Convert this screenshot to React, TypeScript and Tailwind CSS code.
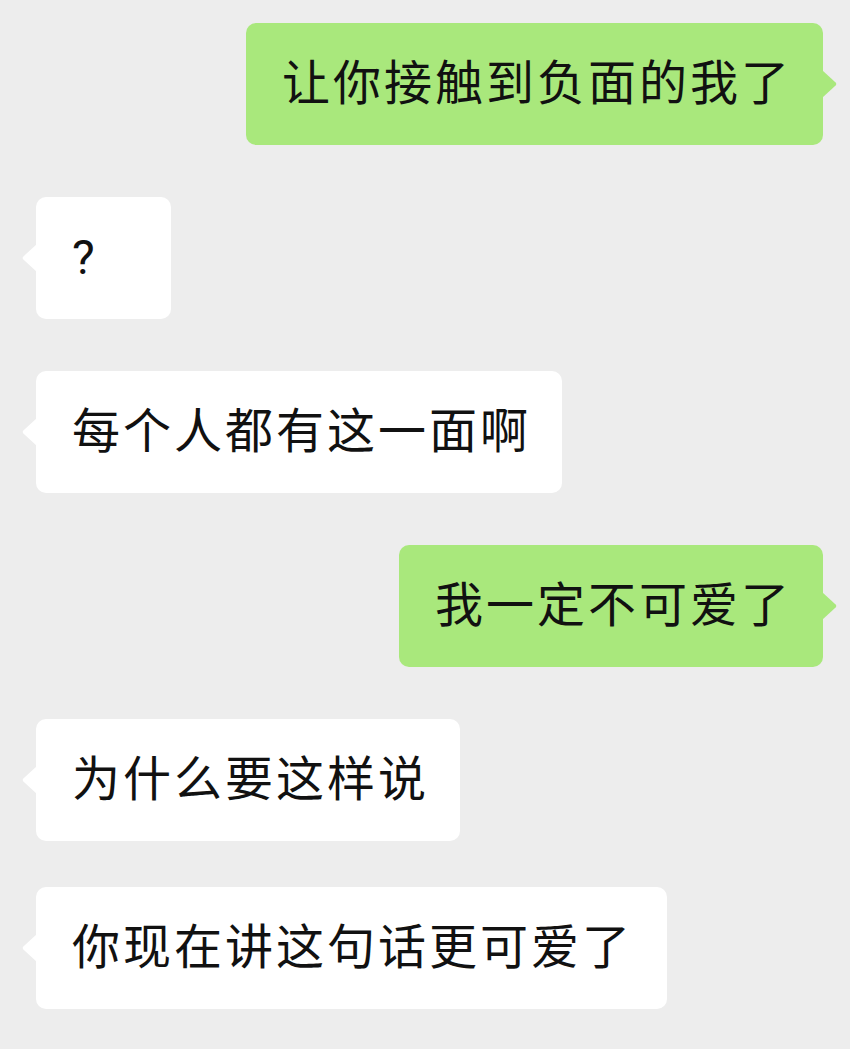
import React from 'react';

type Msg = {
  text: string;
  mine: boolean;
  extra?: string;
};

const messages: Msg[] = [
  { text: '让你接触到负面的我了', mine: true },
  { text: '?', mine: false, extra: 'min-w-[135px]' },
  { text: '每个人都有这一面啊', mine: false },
  { text: '我一定不可爱了', mine: true },
  { text: '为什么要这样说', mine: false },
  { text: '你现在讲这句话更可爱了', mine: false, extra: 'w-[631px] -mt-[6px]' },
];

function Tail({ mine }: { mine: boolean }) {
  // little pointer on the side of the bubble
  return (
    <svg
      width="16"
      height="28"
      viewBox="0 0 16 28"
      className={`absolute top-1/2 -translate-y-1/2 ${mine ? '-right-[15px]' : '-left-[15px] -scale-x-100'}`}
    >
      <path
        d="M0 0 L13.6 12.4 Q15.2 14 13.6 15.6 L0 28 Z"
        fill={mine ? '#a9e87c' : '#ffffff'}
      />
    </svg>
  );
}

function Bubble({ msg }: { msg: Msg }) {
  return (
    <div
      className={`relative h-[122px] flex items-center rounded-[10px] pl-[36px] pr-[31px] ${
        msg.mine ? 'self-end bg-[#a9e87c]' : 'self-start bg-white'
      } ${msg.extra ?? ''}`}
    >
      <Tail mine={msg.mine} />
      <span className="text-[48px] leading-none tracking-[3px] text-[#111111] whitespace-nowrap">
        {msg.text}
      </span>
    </div>
  );
}

export default function App() {
  return (
    <div
      className="w-[850px] h-[1049px] bg-[#ededed] overflow-hidden"
      style={{ fontFamily: 'Roboto, "Noto Sans CJK SC", sans-serif' }}
    >
      <div className="flex flex-col gap-[52px] pt-[23px] pl-[36px] pr-[27px]">
        {messages.map((m, i) => (
          <Bubble key={i} msg={m} />
        ))}
      </div>
    </div>
  );
}
